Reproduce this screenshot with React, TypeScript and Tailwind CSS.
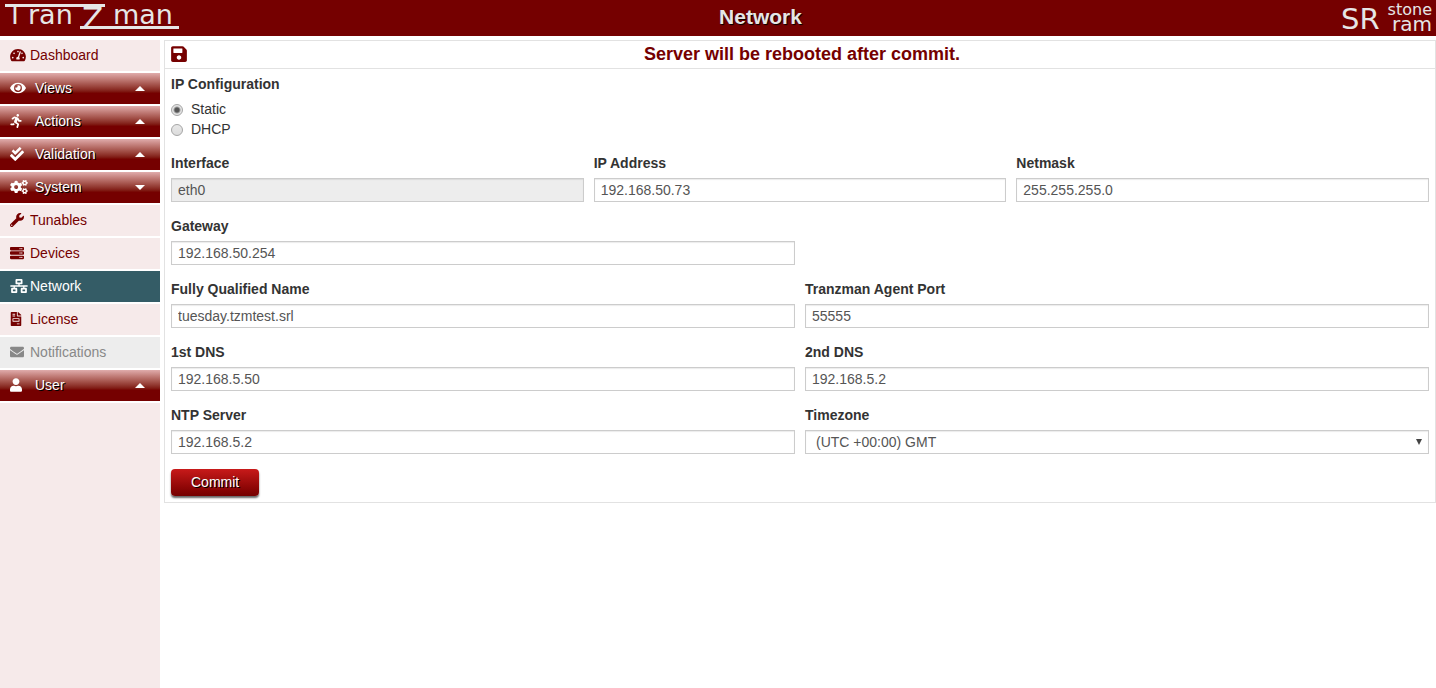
import React, { useState } from 'react';
import {
  FaCheckDouble,
  FaCogs,
  FaEnvelope,
  FaEye,
  FaFileInvoice,
  FaNetworkWired,
  FaRunning,
  FaSave,
  FaServer,
  FaTachometerAlt,
  FaUser,
  FaWrench,
} from 'react-icons/fa';
import type { IconType } from 'react-icons';

type MenuEntry = {
  label: string;
  icon: IconType;
  size: string;
  kind: 'link' | 'group';
  open?: boolean;
  active?: boolean;
  disabled?: boolean;
};

const narrow = 'h-3.5 w-3';
const normal = 'h-3.5 w-3.5';
const wide = 'h-3.5 w-4';
const widest = 'h-3.5 w-[18px]';

const menu: MenuEntry[] = [
  { label: 'Dashboard', icon: FaTachometerAlt, size: wide, kind: 'link' },
  { label: 'Views', icon: FaEye, size: wide, kind: 'group' },
  { label: 'Actions', icon: FaRunning, size: narrow, kind: 'group' },
  { label: 'Validation', icon: FaCheckDouble, size: normal, kind: 'group' },
  { label: 'System', icon: FaCogs, size: widest, kind: 'group', open: true },
  { label: 'Tunables', icon: FaWrench, size: normal, kind: 'link' },
  { label: 'Devices', icon: FaServer, size: normal, kind: 'link' },
  { label: 'Network', icon: FaNetworkWired, size: widest, kind: 'link', active: true },
  { label: 'License', icon: FaFileInvoice, size: narrow, kind: 'link' },
  { label: 'Notifications', icon: FaEnvelope, size: normal, kind: 'link', disabled: true },
  { label: 'User', icon: FaUser, size: narrow, kind: 'group' },
];

function TranzmanLogo() {
  return (
    <svg width="180" height="36" viewBox="0 0 180 36" fill="#e6e6e6" role="img" aria-label="TranZman">
      <rect x="5" y="4" width="100" height="3" />
      <rect x="80" y="26" width="99" height="3" />
      <g fontFamily="'DejaVu Sans', sans-serif">
        <text x="7" y="24" fontSize="26">T</text>
        <text x="28" y="24" fontSize="27">ran</text>
        <text x="82" y="29" fontSize="31">Z</text>
        <text x="113" y="24" fontSize="27">man</text>
      </g>
    </svg>
  );
}

function StoneRamLogo() {
  return (
    <svg width="95" height="36" viewBox="0 0 95 36" fill="#e6e6e6" role="img" aria-label="SR stone ram">
      <g fontFamily="'DejaVu Sans', sans-serif">
        <text x="0" y="29" fontSize="29">SR</text>
        <text x="91" y="15" fontSize="16" textAnchor="end">stone</text>
        <text x="91" y="31" fontSize="20" textAnchor="end">ram</text>
      </g>
    </svg>
  );
}

function Caret({ down }: { down?: boolean }) {
  return (
    <svg width="10" height="5" viewBox="0 0 10 5" fill="#fff" aria-hidden="true">
      <path d={down ? 'M0 0h10L5 5z' : 'M0 5h10L5 0z'} />
    </svg>
  );
}

function MenuGroup({ entry }: { entry: MenuEntry }) {
  const Icon = entry.icon;
  return (
    <button
      type="button"
      aria-expanded={!!entry.open}
      className="flex h-[31px] w-full items-center bg-linear-to-b from-[#e0acac] to-[#750000] to-65% pr-[15px] pb-px pl-2.5 text-white"
    >
      <span className="w-[25px]">
        <Icon className={entry.size} />
      </span>
      <span className="flex-1 text-left [text-shadow:1px_1px_0_#000]">{entry.label}</span>
      <Caret down={entry.open} />
    </button>
  );
}

function MenuLink({ entry }: { entry: MenuEntry }) {
  const Icon = entry.icon;
  let colors = 'bg-[#f6eaea] text-[#750000]';
  if (entry.active) colors = 'bg-[#345c66] text-white';
  if (entry.disabled) colors = 'bg-[#ededed] text-[#888]';
  return (
    <a href="#" aria-disabled={entry.disabled} className={`flex h-[31px] items-center pb-px pl-2.5 ${colors}`}>
      <span className="w-5">
        <Icon className={entry.size} />
      </span>
      {entry.label}
    </a>
  );
}

function Field({ id, label, value, disabled }: { id: string; label: string; value: string; disabled?: boolean }) {
  return (
    <div>
      <label htmlFor={id} className="mb-[5px] block font-bold">
        {label}
      </label>
      <input
        id={id}
        type="text"
        defaultValue={value}
        disabled={disabled}
        className="block h-6 w-full border border-[#ccc] bg-white px-1.5 text-[#555] shadow-[inset_0_1px_1px_rgba(0,0,0,0.08)] disabled:bg-[#ededed]"
      />
    </div>
  );
}

function Radio({ label, checked, onChange }: { label: string; checked: boolean; onChange: () => void }) {
  return (
    <label className="flex h-5 items-center gap-2">
      <input
        type="radio"
        name="mode"
        checked={checked}
        onChange={onChange}
        className="mt-0.5 size-3 appearance-none rounded-full border border-[#a5a5a5] bg-linear-to-b from-[#e8e8e8] to-[#dcdcdc] checked:bg-[radial-gradient(circle,#555_0_2px,#e4e4e4_4px)]"
      />
      {label}
    </label>
  );
}

export default function App() {
  const [mode, setMode] = useState('static');

  return (
    <div className="flex min-h-screen flex-col bg-white font-['Liberation_Sans',Arial,sans-serif] text-sm text-[#333]">
      {/* Top bar */}
      <header className="mb-1 flex h-9 items-center justify-between bg-[#750000]">
        <TranzmanLogo />
        <h1 className="pb-0.5 text-[21px] font-bold text-[#e6e6e6] [text-shadow:1px_1px_1px_#000]">Network</h1>
        <StoneRamLogo />
      </header>

      <div className="flex flex-1">
        {/* Sidebar */}
        <nav className="flex w-40 shrink-0 flex-col gap-0.5">
          {menu.map((entry) =>
            entry.kind === 'group' ? (
              <MenuGroup key={entry.label} entry={entry} />
            ) : (
              <MenuLink key={entry.label} entry={entry} />
            )
          )}
          <div className="flex-1 bg-[#f6eaea]" />
        </nav>

        <main className="ml-1 min-w-0 flex-1 self-start border border-[#e2e2e2]">
          <div className="flex h-7 items-center border-b border-[#e2e2e2] px-1.5 pb-0.5">
            <button type="button" aria-label="Save" className="text-[#750000]">
              <FaSave className="h-[18px] w-4" />
            </button>
            <h2 className="flex-1 pr-3 text-center text-lg font-bold text-[#750000]">
              Server will be rebooted after commit.
            </h2>
          </div>

          <form className="flex flex-col gap-3.5 px-1.5 py-[5px]" onSubmit={(e) => e.preventDefault()}>
            <fieldset>
              <legend className="mb-[5px] font-bold">IP Configuration</legend>
              <Radio label="Static" checked={mode === 'static'} onChange={() => setMode('static')} />
              <Radio label="DHCP" checked={mode === 'dhcp'} onChange={() => setMode('dhcp')} />
            </fieldset>

            <div className="grid grid-cols-3 gap-2.5">
              <Field id="interface" label="Interface" value="eth0" disabled />
              <Field id="ip" label="IP Address" value="192.168.50.73" />
              <Field id="netmask" label="Netmask" value="255.255.255.0" />
            </div>

            <div className="grid grid-cols-2 gap-x-2.5 gap-y-3.5">
              <Field id="gateway" label="Gateway" value="192.168.50.254" />
              <div />
              <Field id="fqn" label="Fully Qualified Name" value="tuesday.tzmtest.srl" />
              <Field id="port" label="Tranzman Agent Port" value="55555" />
              <Field id="dns1" label="1st DNS" value="192.168.5.50" />
              <Field id="dns2" label="2nd DNS" value="192.168.5.2" />
              <Field id="ntp" label="NTP Server" value="192.168.5.2" />
              <div>
                <label htmlFor="timezone" className="mb-[5px] block font-bold">
                  Timezone
                </label>
                <div className="relative">
                  <select
                    id="timezone"
                    className="block h-6 w-full appearance-none border border-[#ccc] bg-white px-2.5 text-[#555] shadow-[inset_0_1px_1px_rgba(0,0,0,0.08)]"
                  >
                    <option>(UTC +00:00) GMT</option>
                  </select>
                  <svg
                    width="6"
                    height="6"
                    viewBox="0 0 6 6"
                    fill="#444"
                    aria-hidden="true"
                    className="pointer-events-none absolute top-[9px] right-[7px]"
                  >
                    <path d="M0 0h6L3 6z" />
                  </svg>
                </div>
              </div>
            </div>

            <button
              type="submit"
              className="my-px h-[27px] self-start rounded bg-linear-to-b from-[#c81a1a] to-[#750000] px-5 pb-0.5 text-white shadow-[0_2px_2px_rgba(0,0,0,0.6)] [text-shadow:1px_1px_0_#000]"
            >
              Commit
            </button>
          </form>
        </main>
      </div>
    </div>
  );
}
